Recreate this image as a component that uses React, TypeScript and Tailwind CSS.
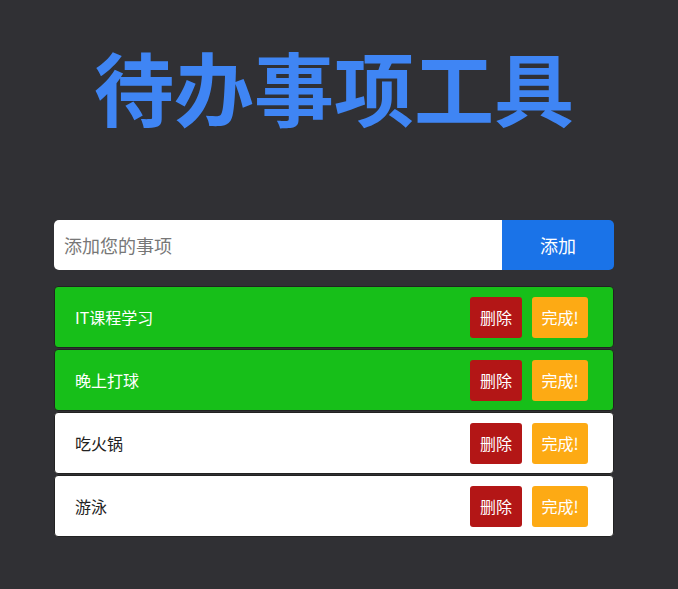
import React from "react";

const items = [
  { text: "IT课程学习", done: true },
  { text: "晚上打球", done: true },
  { text: "吃火锅", done: false },
  { text: "游泳", done: false },
];

export default function App() {
  return (
    <div
      className="min-h-[589px] w-full bg-[#303034] pt-[30px]"
      style={{ fontFamily: '"Noto Sans CJK SC", "Noto Sans", sans-serif' }}
    >
      <div className="w-[668px]">
        <h1 className="text-center text-[80px] font-bold leading-[110px] text-[#3f85f4]">
          待办事项工具
        </h1>
        <div className="mx-auto mt-[80px] w-[560px]">
          <div className="flex h-[50px] overflow-hidden rounded-[5px]">
            <input
              className="min-w-0 flex-1 bg-white px-[10px] text-[18px] text-[#333] outline-none placeholder:text-[#777]"
              placeholder="添加您的事项"
            />
            <button className="w-[112px] bg-[#1a73e8] text-[18px] text-white">添加</button>
          </div>
          <div className="mt-[16px] flex flex-col gap-[1px]">
            {items.map((it) => (
              <div
                key={it.text}
                className={`flex h-[62px] items-center rounded-[4px] border border-[#222] pl-[20px] pr-[25px] ${
                  it.done ? "bg-[#17bf19] text-white" : "bg-white text-[#222]"
                }`}
              >
                <span className="flex-1 text-[16px]">{it.text}</span>
                <button className="h-[41px] w-[52px] rounded-[3px] bg-[#b31616] text-[16px] text-white">
                  删除
                </button>
                <button className="ml-[10px] h-[41px] w-[56px] rounded-[3px] bg-[#fdaa14] text-[16px] text-white">
                  完成!
                </button>
              </div>
            ))}
          </div>
        </div>
      </div>
    </div>
  );
}
